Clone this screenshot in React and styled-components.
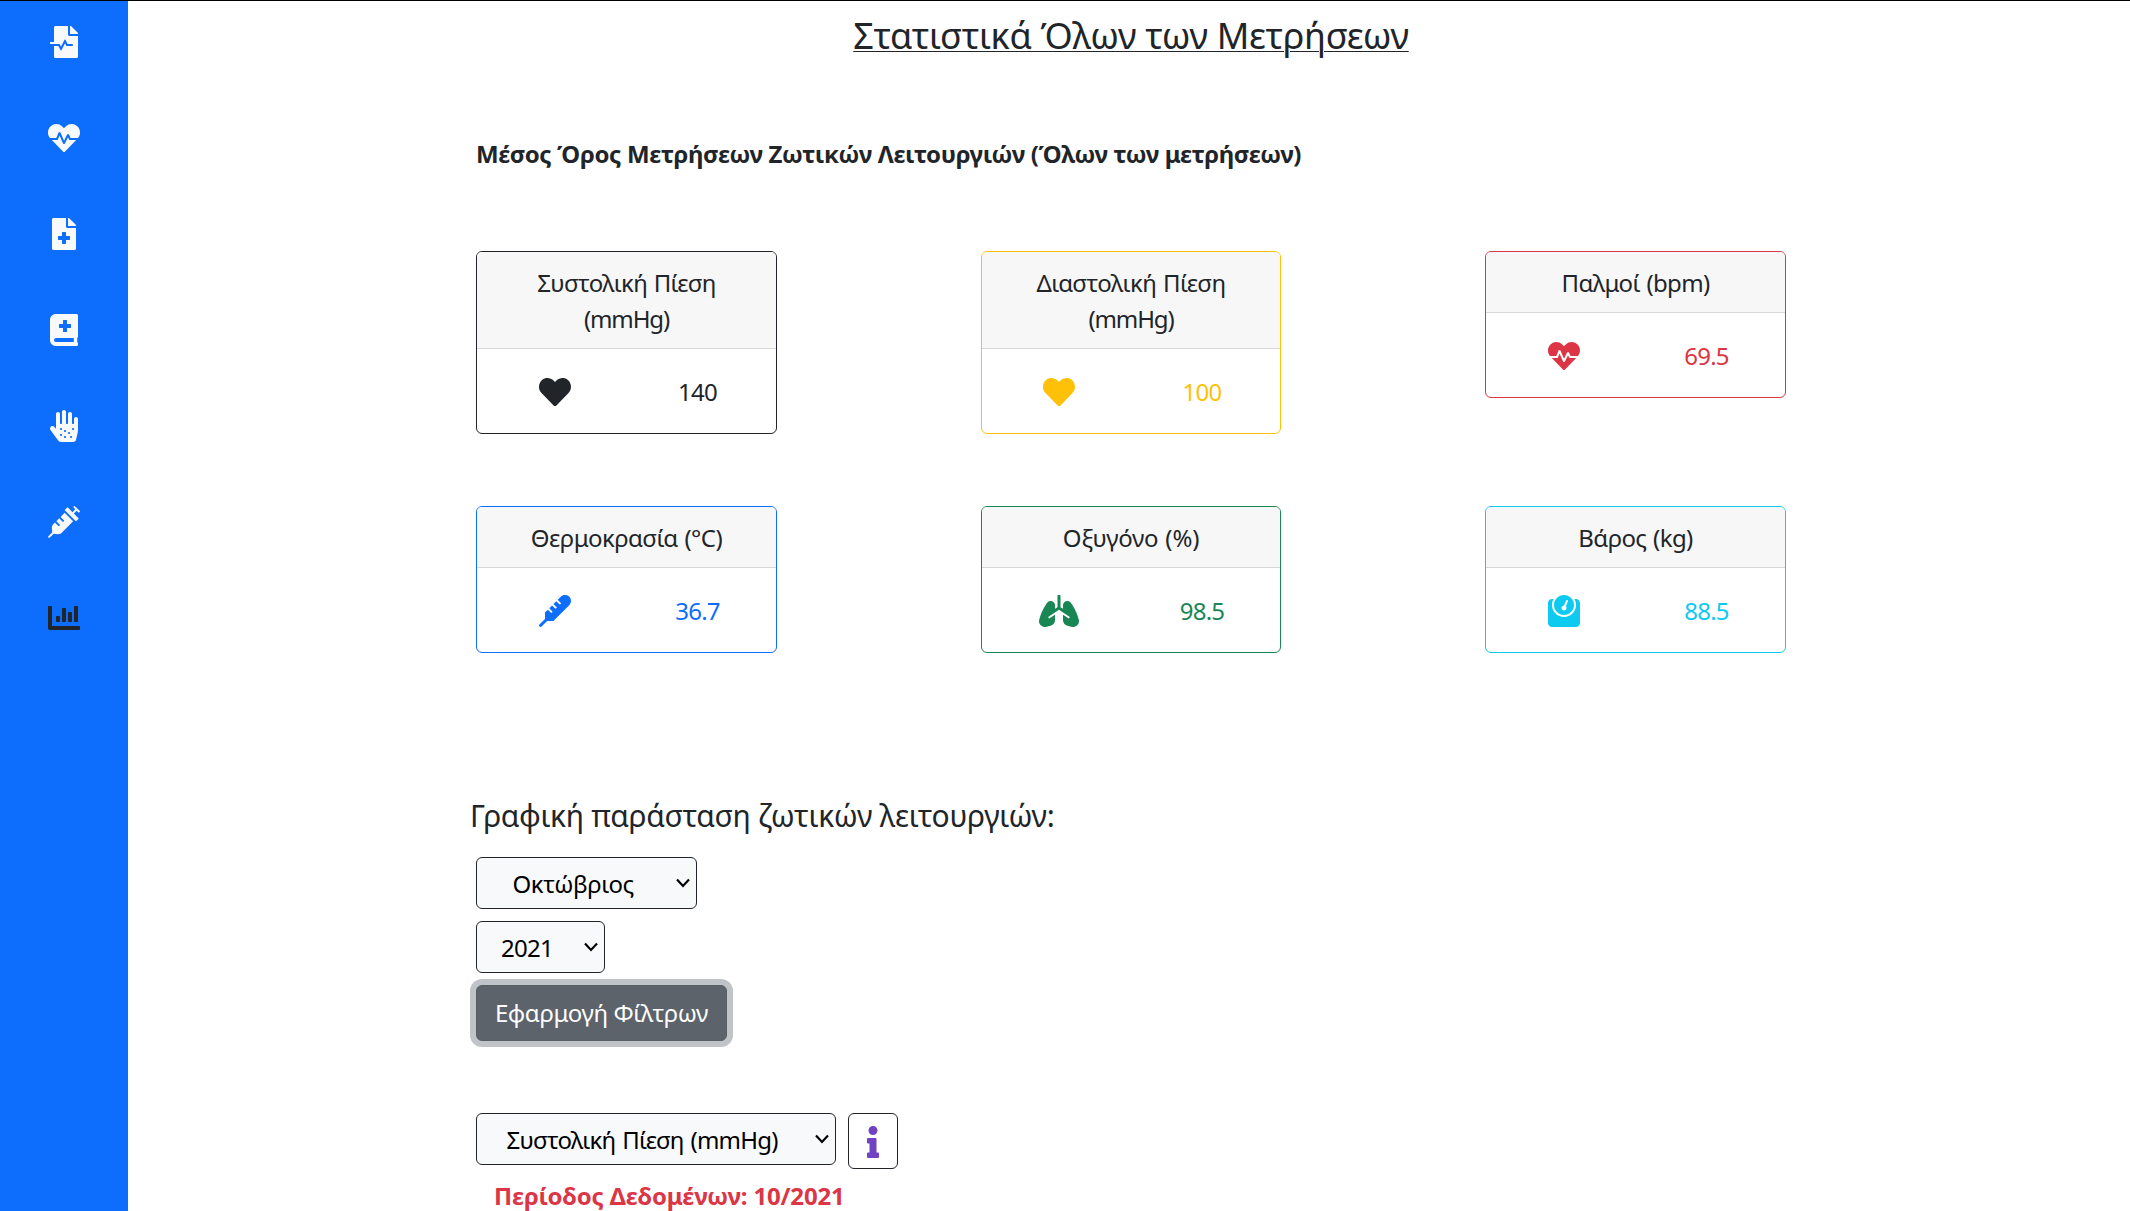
import React from "react";
import styled, { createGlobalStyle } from "styled-components";
import {
  FaFileMedicalAlt,
  FaHeartbeat,
  FaFileMedical,
  FaBookMedical,
  FaAllergies,
  FaSyringe,
  FaChartBar,
  FaHeart,
  FaThermometer,
  FaLungs,
  FaWeight,
  FaInfo,
} from "react-icons/fa";

const GlobalStyle = createGlobalStyle`
  *, *::before, *::after { box-sizing: border-box; }
  body {
    margin: 0;
    background: #fff;
    color: #212529;
    font-family: "Noto Sans", "Open Sans", sans-serif;
    font-size: 24px;
    line-height: 36px;
  }
`;

const Page = styled.div`
  display: flex;
  height: 1211px;
  overflow: hidden;
  border-top: 1px solid #000;
`;

const Sidebar = styled.nav`
  display: flex;
  flex-direction: column;
  align-items: center;
  gap: 64px;
  flex: none;
  width: 128px;
  padding-top: 25px;
  background: #0d6efd;
`;

const NavItem = styled.a`
  display: flex;
  color: ${(p) => (p.$active ? "#212529" : "#f8f9fa")};

  svg {
    width: 32px;
    height: 32px;
  }
`;

const Main = styled.main`
  display: flex;
  flex-direction: column;
  flex: none;
  width: 1310px;
  margin-left: 348px;
`;

const Title = styled.h1`
  align-self: center;
  margin: 13px 0 0;
  font-size: 36px;
  font-weight: 400;
  line-height: 44px;
  letter-spacing: -0.355px;
  text-decoration: underline;
  text-decoration-thickness: 1px;
  text-underline-offset: 2px;
`;

const Subtitle = styled.p`
  margin: 78px 0 0;
  font-weight: 700;
  letter-spacing: -0.375px;
`;

const CardGrid = styled.section`
  display: grid;
  grid-template-columns: 301px 300px 301px;
  justify-content: space-between;
  align-items: start;
  row-gap: 72px;
  margin-top: 79px;
`;

const Card = styled.article`
  border: 1px solid ${(p) => p.$color};
  border-radius: 6px;
  overflow: hidden;
`;

const CardHeader = styled.header`
  display: flex;
  flex-direction: column;
  align-items: center;
  padding: 13px 12px 11px;
  background: #f7f7f7;
  border-bottom: 1px solid #d8d8d9;
`;

const HeaderLine = styled.span`
  white-space: nowrap;
  letter-spacing: ${(p) => p.$spacing}px;
  word-spacing: 1px;
`;

const CardBody = styled.div`
  display: grid;
  grid-template-columns: 144px 144px;
  justify-content: center;
  align-items: center;
  justify-items: center;
  height: 84px;
  padding-top: 2px;
  color: ${(p) => p.$color};

  svg {
    width: 40px;
    height: 32px;
  }
`;

const Value = styled.span`
  margin-right: 2px;
  letter-spacing: -0.8px;
`;

const SectionTitle = styled.h2`
  margin: 145px 0 23px -6px;
  font-size: 30px;
  font-weight: 400;
  line-height: 36px;
  letter-spacing: -0.3px;
`;

const Filters = styled.div`
  display: flex;
  flex-direction: column;
  align-items: flex-start;
  gap: 12px;
`;

const SelectBox = styled.div`
  display: flex;
  align-items: center;
  justify-content: space-between;
  width: ${(p) => p.$width}px;
  height: 52px;
  padding: 2px 6px 0 ${(p) => p.$indent}px;
  background: #f8f9fa;
  border: 1px solid #212529;
  border-radius: 6px;
  color: #000;
  letter-spacing: ${(p) => p.$spacing}px;
  word-spacing: 1.5px;
  white-space: nowrap;

  svg {
    margin-top: -3px;
  }
`;

const ApplyButton = styled.button`
  height: 56px;
  width: 251px;
  padding: 0;
  background: #5c636a;
  border: 1px solid #565e64;
  border-radius: 6px;
  box-shadow: 0 0 0 6px #c0c4c8;
  color: #fff;
  font: inherit;
  letter-spacing: -0.4px;
`;

const ChartControls = styled.div`
  display: flex;
  align-items: flex-start;
  gap: 12px;
  margin-top: 72px;
`;

const InfoButton = styled.button`
  display: flex;
  align-items: center;
  justify-content: center;
  width: 50px;
  height: 56px;
  padding: 2px 0 0;
  background: #fff;
  border: 1px solid #212529;
  border-radius: 6px;
  color: #6f42c1;

  svg {
    width: 32px;
    height: 32px;
  }
`;

const Period = styled.p`
  margin: 9px 0 0 18px;
  color: #dc3545;
  font-weight: 700;
  letter-spacing: -0.17px;
`;

const navItems = [
  FaFileMedicalAlt,
  FaHeartbeat,
  FaFileMedical,
  FaBookMedical,
  FaAllergies,
  FaSyringe,
  FaChartBar,
];

const cards = [
  { lines: [["Συστολική Πίεση", -0.68], ["(mmHg)", -1.1]], icon: FaHeart, value: "140", color: "#212529" },
  { lines: [["Διαστολική Πίεση", -0.56], ["(mmHg)", -1.1]], icon: FaHeart, value: "100", color: "#ffc107" },
  { lines: [["Παλμοί (bpm)", -0.65]], icon: FaHeartbeat, value: "69.5", color: "#dc3545" },
  { lines: [["Θερμοκρασία (°C)", -0.54]], icon: FaThermometer, value: "36.7", color: "#0d6efd" },
  { lines: [["Οξυγόνο (%)", -0.18]], icon: FaLungs, value: "98.5", color: "#198754" },
  { lines: [["Βάρος (kg)", -0.6]], icon: FaWeight, value: "88.5", color: "#0dcaf0" },
];

const Chevron = () => (
  <svg width="14" height="10" viewBox="0 0 14 10" fill="none" stroke="#000" strokeWidth="2.2">
    <path d="M1 1.5 L7 8 L13 1.5" />
  </svg>
);

const Select = ({ width, indent, spacing, children }) => (
  <SelectBox $width={width} $indent={indent} $spacing={spacing}>
    <span>{children}</span>
    <Chevron />
  </SelectBox>
);

export default function App() {
  return (
    <>
      <GlobalStyle />
      <Page>
        <Sidebar>
          {navItems.map((Icon, i) => (
            <NavItem key={i} $active={i === navItems.length - 1}>
              <Icon />
            </NavItem>
          ))}
        </Sidebar>
        <Main>
          <Title>Στατιστικά Όλων των Μετρήσεων</Title>
          <Subtitle>Μέσος Όρος Μετρήσεων Ζωτικών Λειτουργιών (Όλων των μετρήσεων)</Subtitle>
          <CardGrid>
            {cards.map(({ lines, icon: Icon, value, color }) => (
              <Card key={lines[0][0]} $color={color}>
                <CardHeader>
                  {lines.map(([text, spacing]) => (
                    <HeaderLine key={text} $spacing={spacing}>{text}</HeaderLine>
                  ))}
                </CardHeader>
                <CardBody $color={color}>
                  <Icon />
                  <Value>{value}</Value>
                </CardBody>
              </Card>
            ))}
          </CardGrid>
          <SectionTitle>Γραφική παράσταση ζωτικών λειτουργιών:</SectionTitle>
          <Filters>
            <Select width={221} indent={35.5} spacing={-0.38}>Οκτώβριος</Select>
            <Select width={129} indent={24} spacing={-0.75}>2021</Select>
            <ApplyButton>Εφαρμογή Φίλτρων</ApplyButton>
          </Filters>
          <ChartControls>
            <Select width={360} indent={29.5} spacing={-0.8}>Συστολική Πίεση (mmHg)</Select>
            <InfoButton>
              <FaInfo />
            </InfoButton>
          </ChartControls>
          <Period>Περίοδος Δεδομένων: 10/2021</Period>
        </Main>
      </Page>
    </>
  );
}
